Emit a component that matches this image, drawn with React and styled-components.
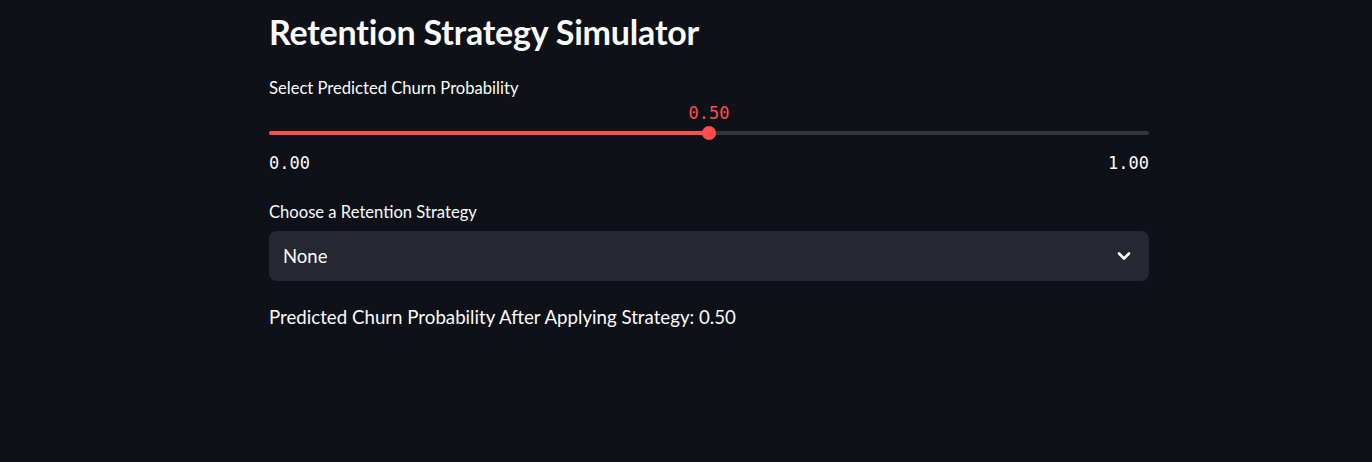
import React, { useState } from "react";
import styled, { createGlobalStyle } from "styled-components";

const GlobalStyle = createGlobalStyle`
  html, body {
    margin: 0;
    padding: 0;
    background: #0e1117;
  }
  body {
    font-family: Lato, "Noto Sans", sans-serif;
    color: #fafafa;
  }
`;

const Page = styled.div`
  width: 1372px;
  height: 462px;
  background: #0e1117;
  overflow: hidden;
`;

const Column = styled.div`
  width: 880px;
  margin-left: 269px;
  display: flex;
  flex-direction: column;
`;

const Title = styled.h1`
  margin: 0;
  height: 66px;
  line-height: 64px;
  font-size: 34px;
  font-weight: 700;
  letter-spacing: -0.2px;
`;

const Label = styled.div`
  margin-top: ${(p) => p.$top}px;
  height: 22px;
  line-height: 22px;
  font-size: 16.6px;
`;

const ValueRow = styled.div`
  position: relative;
  margin-top: 4px;
  height: 20px;
`;

const Mono = styled.span`
  font-family: "DejaVu Sans Mono", "Liberation Mono", monospace;
  font-size: 17px;
  line-height: 20px;
  color: ${(p) => p.$color || "#fafafa"};
`;

const ThumbValue = styled(Mono)`
  position: absolute;
  top: 0;
  transform: translateX(-50%);
`;

const SliderWrap = styled.div`
  position: relative;
  margin-top: 3px;
  height: 14px;
  display: flex;
  align-items: center;
`;

const Track = styled.div`
  width: 100%;
  height: 4px;
  border-radius: 2px;
  background: #34363e;
  overflow: hidden;
`;

const Fill = styled.div`
  height: 100%;
  background: #ff4b4b;
`;

const Thumb = styled.div`
  position: absolute;
  top: 0;
  width: 14px;
  height: 14px;
  border-radius: 50%;
  background: #ff4b4b;
  transform: translateX(-50%);
`;

const Ticks = styled.div`
  margin-top: 13px;
  height: 20px;
  display: flex;
  justify-content: space-between;
`;

const Select = styled.div`
  margin-top: 8px;
  height: 50px;
  border-radius: 8px;
  background: #262730;
  display: flex;
  align-items: center;
  justify-content: space-between;
  padding: 0 18px 0 14px;
  box-sizing: border-box;
  font-size: 18.5px;
`;

const Result = styled.div`
  margin-top: 25px;
  height: 24px;
  line-height: 22px;
  font-size: 18.7px;
`;

const Chevron = () => (
  <svg width="14" height="10" viewBox="0 0 14 10">
    <polyline
      points="2,2.5 7,7.5 12,2.5"
      fill="none"
      stroke="#fafafa"
      strokeWidth="2.6"
      strokeLinecap="round"
      strokeLinejoin="round"
    />
  </svg>
);

export default function App() {
  const [value] = useState(0.5);
  const pct = `${value * 100}%`;

  return (
    <Page>
      <GlobalStyle />
      <Column>
        <Title>Retention Strategy Simulator</Title>
        <Label $top={11}>Select Predicted Churn Probability</Label>
        <ValueRow>
          <ThumbValue $color="#ff4b4b" style={{ left: pct }}>
            {value.toFixed(2)}
          </ThumbValue>
        </ValueRow>
        <SliderWrap>
          <Track>
            <Fill style={{ width: pct }} />
          </Track>
          <Thumb style={{ left: pct }} />
        </SliderWrap>
        <Ticks>
          <Mono>0.00</Mono>
          <Mono>1.00</Mono>
        </Ticks>
        <Label $top={28}>Choose a Retention Strategy</Label>
        <Select>
          <span>None</span>
          <Chevron />
        </Select>
        <Result>
          Predicted Churn Probability After Applying Strategy: {value.toFixed(2)}
        </Result>
      </Column>
    </Page>
  );
}
